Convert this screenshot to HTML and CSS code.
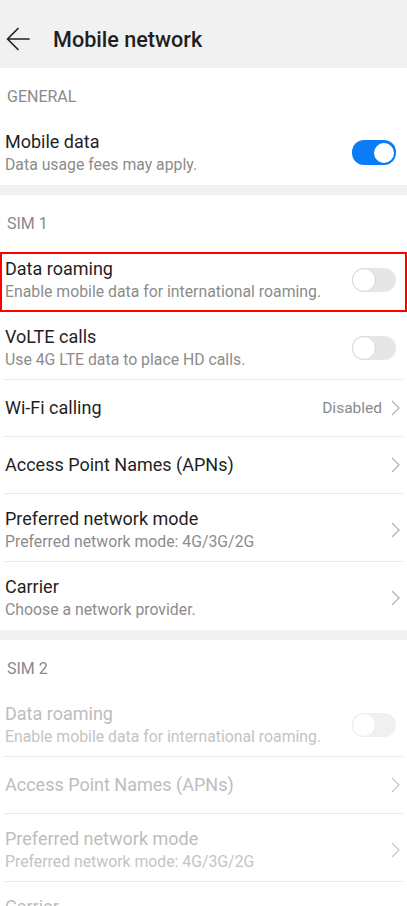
FILE: index.html
```html
<!DOCTYPE html>
<html lang="en">
<head>
  <meta charset="UTF-8">
  <meta name="viewport" content="width=device-width, initial-scale=1.0">
  <title>Mobile network</title>
  <link rel="stylesheet" href="styles.css">
</head>
<body>
  <header class="topbar">
    <button class="back-btn" aria-label="Back">
      <svg width="24" height="24" viewBox="0 0 24 24">
        <path d="M1.5 12H23M12 1.5L1.5 12L12 22.5" fill="none" stroke="#222" stroke-width="1.7" stroke-linecap="round" stroke-linejoin="round"/>
      </svg>
    </button>
    <h1>Mobile network</h1>
  </header>

  <section class="group">
    <h2 class="group-title">GENERAL</h2>
    <ul class="list">
      <li class="item">
        <div class="item-text">
          <span class="item-title">Mobile data</span>
          <span class="item-sub">Data usage fees may apply.</span>
        </div>
        <span class="switch on"></span>
      </li>
    </ul>
  </section>

  <section class="group">
    <h2 class="group-title">SIM 1</h2>
    <ul class="list">
      <li class="item marked">
        <div class="item-text">
          <span class="item-title">Data roaming</span>
          <span class="item-sub">Enable mobile data for international roaming.</span>
        </div>
        <span class="switch"></span>
      </li>
      <li class="item">
        <div class="item-text">
          <span class="item-title">VoLTE calls</span>
          <span class="item-sub">Use 4G LTE data to place HD calls.</span>
        </div>
        <span class="switch"></span>
      </li>
      <li class="item single">
        <div class="item-text">
          <span class="item-title">Wi-Fi calling</span>
        </div>
        <span class="item-value">Disabled</span>
        <svg class="chevron" width="9" height="16" viewBox="0 0 9 16"><path d="M1 1L8 8L1 15"/></svg>
      </li>
      <li class="item single">
        <div class="item-text">
          <span class="item-title">Access Point Names (APNs)</span>
        </div>
        <svg class="chevron" width="9" height="16" viewBox="0 0 9 16"><path d="M1 1L8 8L1 15"/></svg>
      </li>
      <li class="item">
        <div class="item-text">
          <span class="item-title">Preferred network mode</span>
          <span class="item-sub">Preferred network mode: 4G/3G/2G</span>
        </div>
        <svg class="chevron" width="9" height="16" viewBox="0 0 9 16"><path d="M1 1L8 8L1 15"/></svg>
      </li>
      <li class="item">
        <div class="item-text">
          <span class="item-title">Carrier</span>
          <span class="item-sub">Choose a network provider.</span>
        </div>
        <svg class="chevron" width="9" height="16" viewBox="0 0 9 16"><path d="M1 1L8 8L1 15"/></svg>
      </li>
    </ul>
  </section>

  <section class="group disabled">
    <h2 class="group-title">SIM 2</h2>
    <ul class="list">
      <li class="item">
        <div class="item-text">
          <span class="item-title">Data roaming</span>
          <span class="item-sub">Enable mobile data for international roaming.</span>
        </div>
        <span class="switch"></span>
      </li>
      <li class="item single">
        <div class="item-text">
          <span class="item-title">Access Point Names (APNs)</span>
        </div>
        <svg class="chevron" width="9" height="16" viewBox="0 0 9 16"><path d="M1 1L8 8L1 15"/></svg>
      </li>
      <li class="item">
        <div class="item-text">
          <span class="item-title">Preferred network mode</span>
          <span class="item-sub">Preferred network mode: 4G/3G/2G</span>
        </div>
        <svg class="chevron" width="9" height="16" viewBox="0 0 9 16"><path d="M1 1L8 8L1 15"/></svg>
      </li>
      <li class="item">
        <div class="item-text">
          <span class="item-title">Carrier</span>
          <span class="item-sub">Choose a network provider.</span>
        </div>
        <svg class="chevron" width="9" height="16" viewBox="0 0 9 16"><path d="M1 1L8 8L1 15"/></svg>
      </li>
    </ul>
  </section>
</body>
</html>
```

FILE: styles.css
```css
body {
  margin: 0;
  font-family: Roboto, 'Noto Sans', sans-serif;
  background: #fff;
  color: #1f1f1f;
}

/* top bar */
.topbar {
  height: 58px;
  padding-top: 10px;
  background: #f1f1f1;
  display: flex;
  align-items: center;
}
.back-btn {
  border: none;
  background: none;
  padding: 0;
  margin-left: 6px;
  width: 24px;
  height: 24px;
  display: flex;
}
.topbar h1 {
  margin: 0 0 0 23px;
  font-size: 21.6px;
  font-weight: 500;
  color: #1f1f1f;
}

/* groups */
.group + .group {
  border-top: 10px solid #f1f1f1;
}
.group-title {
  margin: 0;
  padding: 20px 7px 11px;
  font-size: 16px;
  line-height: 18px;
  font-weight: 400;
  color: #8a8a8a;
}
.list {
  list-style: none;
  margin: 0;
  padding: 0 4px;
}
.item {
  position: relative;
  display: flex;
  align-items: center;
  padding: 13px 0 9px 1px;
  border-bottom: 1px solid #e9e9e9;
}
.item:last-child {
  border-bottom-color: transparent;
}
.item.single {
  padding: 16px 0 16px 1px;
}
.item-text {
  flex: 1;
  display: flex;
  flex-direction: column;
}
.item-title {
  font-size: 18px;
  line-height: 24px;
}
.item-sub {
  font-size: 15.8px;
  line-height: 21px;
  color: #8c8c8c;
}
.item-value {
  font-size: 15.5px;
  color: #8a8a8a;
  margin-right: 9px;
}
.chevron {
  margin-right: 3px;
}
.chevron path {
  fill: none;
  stroke: #b3b3b3;
  stroke-width: 1.3;
}

/* red highlight around a row */
.item.marked::after {
  content: '';
  position: absolute;
  top: 8px;
  bottom: -1px;
  left: -4px;
  right: -4px;
  border: 2px solid #f00;
}

/* switches */
.switch {
  box-sizing: border-box;
  width: 44px;
  height: 24px;
  margin-right: 7px;
  border-radius: 12px;
  background: #e6e6e6;
  display: flex;
  align-items: center;
}
.switch::after {
  content: '';
  box-sizing: border-box;
  width: 24px;
  height: 24px;
  border-radius: 50%;
  background: #fff;
  border: 1px solid #d6d6d6;
}
.switch.on {
  height: 25px;
  background: #0a7cf8;
  justify-content: flex-end;
  padding-right: 2px;
}
.switch.on::after {
  width: 20px;
  height: 20px;
  border: none;
}

/* greyed out SIM 2 group */
.disabled .item-title {
  color: #bdbdbd;
}
.disabled .item-sub {
  color: #c4c4c4;
}
.disabled .chevron path {
  stroke: #c8c8c8;
}
.disabled .switch {
  background: #f0f0f0;
}
.disabled .switch::after {
  border-color: #ebebeb;
}
```
